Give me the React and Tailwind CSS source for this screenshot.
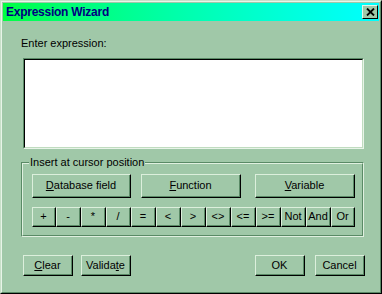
import React from 'react';

const font = { fontFamily: '"Liberation Sans", Arial, sans-serif' };

function Btn({ className = '', children }) {
  return (
    <div className={`border border-t-[#dcefdc] border-l-[#dcefdc] border-r-black border-b-black ${className}`}>
      <div className="h-full w-full flex items-center justify-center border-r border-b border-r-[#5a8a66] border-b-[#5a8a66] text-[11px] text-black leading-none">
        {children}
      </div>
    </div>
  );
}

const ops = ['+', '-', '*', '/', '=', '<', '>', '<>', '<=', '>=', 'Not', 'And', 'Or'];

export default function App() {
  return (
    <div className="w-[382px] h-[294px] bg-[#a0c8a8] border border-t-[#c8e0c8] border-l-[#c8e0c8] border-r-black border-b-black" style={font}>
      <div className="h-full w-full border border-t-[#e8f4e8] border-l-[#e8f4e8] border-r-[#5a8a66] border-b-[#5a8a66] p-px flex flex-col">
        {/* title bar */}
        <div className="h-[18px] flex items-center justify-between pl-[3px] pr-[1px] bg-gradient-to-r from-[#00ff40] to-[#00ffff]">
          <span className="text-[12px] font-bold text-[#000080] leading-none tracking-[-0.25px]">Expression Wizard</span>
          <div className="w-[16px] h-[14px] bg-[#a0c8a8] border border-t-[#e8f4e8] border-l-[#e8f4e8] border-r-black border-b-black flex items-center justify-center">
            <svg width="9" height="8" viewBox="0 0 9 8">
              <path d="M1 0.5 L8 7.5 M8 0.5 L1 7.5" stroke="black" strokeWidth="1.8" />
            </svg>
          </div>
        </div>

        <div className="pl-[18px] flex flex-col">
          <div className="mt-[16px] h-[13px] text-[11px] leading-[13px] text-black">Enter expression:</div>

          {/* expression box */}
          <div className="ml-[2px] mt-[8px] w-[341px] h-[91px] border border-t-[#5a8a66] border-l-[#5a8a66] border-r-[#e8f4e8] border-b-[#e8f4e8]">
            <div className="h-full w-full bg-white border border-t-black border-l-black border-r-[#c0dcc0] border-b-[#c0dcc0]" />
          </div>

          {/* group box */}
          <div className="relative mt-[13px] w-[343px] h-[75px] border border-t-[#5a8a66] border-l-[#5a8a66] border-r-[#e0f0e0] border-b-[#e0f0e0]">
            <div className="h-full w-full border border-t-[#e0f0e0] border-l-[#e0f0e0] border-r-[#5a8a66] border-b-[#5a8a66] pl-[9px] pt-[10px]">
              <div className="flex h-[24px]">
                <Btn className="w-[99px]"><span><u>D</u>atabase field</span></Btn>
                <Btn className="w-[100px] ml-[10px]"><span><u>F</u>unction</span></Btn>
                <Btn className="w-[100px] ml-[14px]"><span><u>V</u>ariable</span></Btn>
              </div>
              <div className="flex h-[20px] mt-[9px]">
                {ops.map((o, i) => (
                  <Btn key={o} className={i === 0 || i === ops.length - 1 ? 'w-[24px]' : 'w-[25px]'}>{o}</Btn>
                ))}
              </div>
            </div>
            <span className="absolute -top-[7px] left-[7px] bg-[#a0c8a8] px-px text-[11px] leading-[13px] text-black">Insert at cursor position</span>
          </div>

          {/* bottom buttons */}
          <div className="mt-[18px] ml-[2px] w-[342px] h-[21px] flex justify-between">
            <div className="flex gap-[8px]">
              <Btn className="w-[50px]"><span><u>C</u>lear</span></Btn>
              <Btn className="w-[50px]"><span>Valida<u>t</u>e</span></Btn>
            </div>
            <div className="flex gap-[10px]">
              <Btn className="w-[50px]">OK</Btn>
              <Btn className="w-[50px]">Cancel</Btn>
            </div>
          </div>
        </div>
      </div>
    </div>
  );
}
